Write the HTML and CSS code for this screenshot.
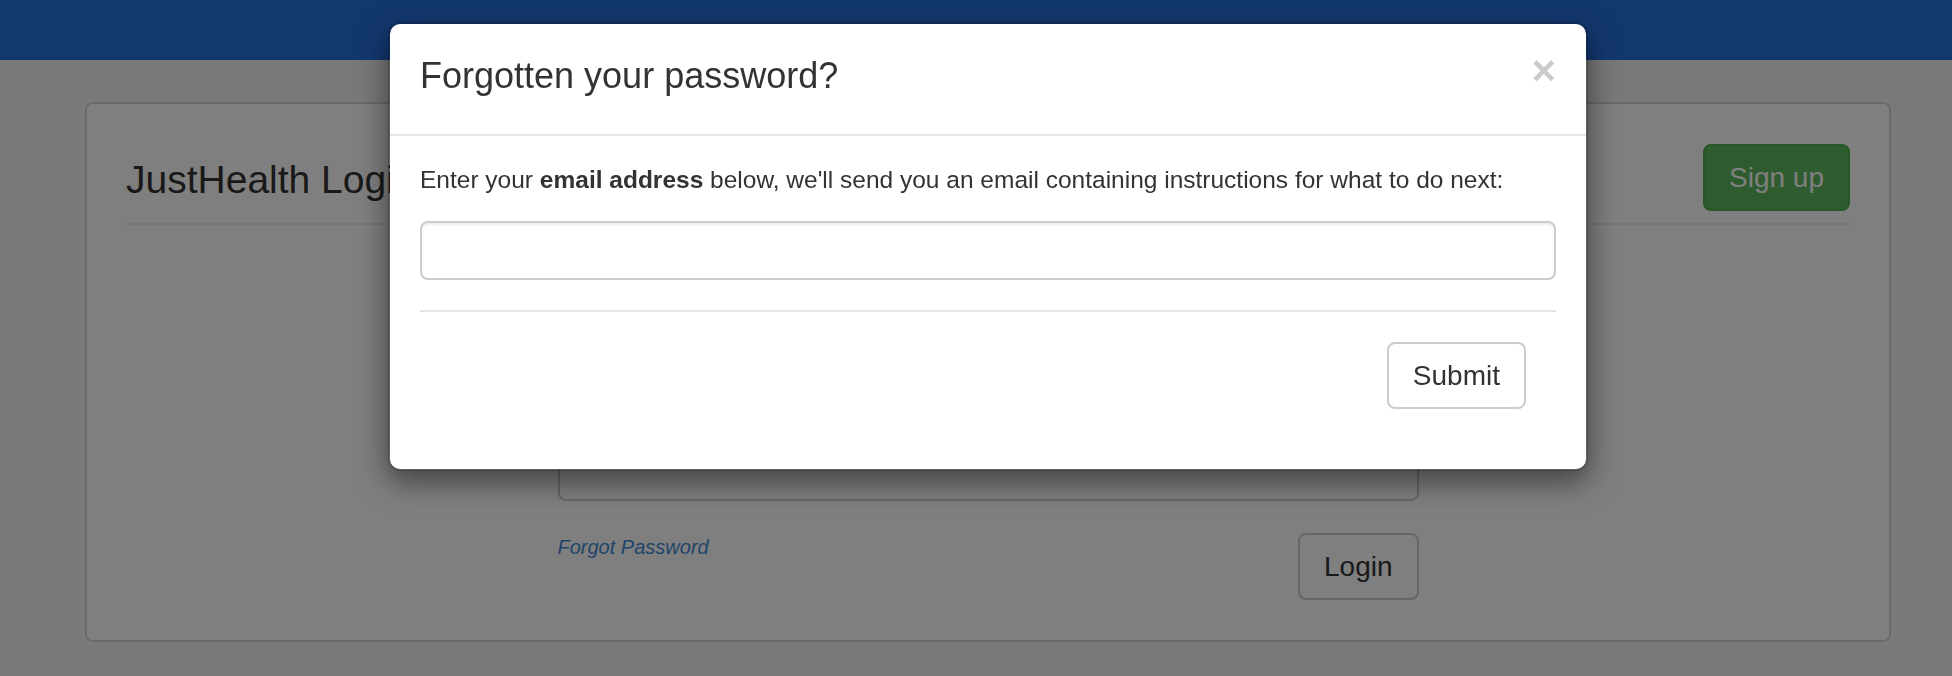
FILE: index.html
```html
<!DOCTYPE html>
<html lang="en">
<head>
<meta charset="utf-8">
<title>JustHealth Login</title>
<link rel="stylesheet" href="styles.css">
</head>
<body>
<nav class="navbar"></nav>
<main class="page">
  <section class="panel">
    <div class="panel-head">
      <h3 class="panel-title">JustHealth Login</h3>
      <a class="btn btn-success" href="#">Sign up</a>
    </div>
    <hr class="divider">
    <form class="login-form">
      <div class="field">
        <label class="field-label">Username</label>
        <input class="field-input" type="text">
      </div>
      <div class="field">
        <label class="field-label">Password</label>
        <input class="field-input" type="password">
      </div>
      <div class="form-actions">
        <a class="forgot" href="#">Forgot Password</a>
        <button class="btn btn-default" type="button">Login</button>
      </div>
    </form>
  </section>
</main>

<div class="backdrop"></div>
<div class="modal">
  <div class="modal-header">
    <h4 class="modal-title">Forgotten your password?</h4>
    <button class="close" type="button">&times;</button>
  </div>
  <div class="modal-body">
    <p class="modal-text">Enter your <strong>email address</strong> below, we'll send you an email containing instructions for what to do next:</p>
    <input class="modal-input" type="email">
    <div class="modal-footer">
      <button class="btn btn-default" type="button">Submit</button>
    </div>
  </div>
</div>
</body>
</html>
```

FILE: styles.css
```css
* { box-sizing: border-box; }

html, body {
  margin: 0;
  height: 100%;
}

body {
  background: #f3f3f3;
  font-family: "Liberation Sans", Arial, Helvetica, sans-serif;
  color: #333;
  overflow: hidden;
}

.navbar {
  height: 60px;
  background: #2670e0;
}

.page {
  padding: 42px 61px 0 85px;
}

.panel {
  background: #fff;
  border: 2px solid #d4d4d4;
  border-radius: 8px;
  padding: 40px 39px 40px 39px;
}

.panel-head {
  display: flex;
  justify-content: space-between;
  align-items: flex-start;
}

.panel-title {
  margin: 15px 0 0 0;
  font-size: 39px;
  line-height: 42px;
  font-weight: normal;
  color: #333;
}

.divider {
  margin: 12px 0 0 0;
  border: 0;
  border-top: 2px solid #eee;
}

.btn {
  display: inline-block;
  font-family: inherit;
  font-size: 28px;
  line-height: 40px;
  padding: 11.5px 24px;
  border: 2px solid #ccc;
  border-radius: 8px;
  text-decoration: none;
  cursor: pointer;
}

.btn-success {
  background: #5cb85c;
  border-color: #4cae4c;
  color: #fff;
}

.btn-default {
  background: #fff;
  border-color: #ccc;
  color: #333;
}

.login-form {
  width: 861px;
  margin: 10px auto 0 auto;
}

.field {
  display: flex;
  flex-direction: column;
  margin-bottom: 30px;
}

.field:last-of-type {
  margin-bottom: 0;
}

.field-label {
  font-size: 28px;
  line-height: 40px;
  font-weight: bold;
  margin-bottom: 10px;
}

.field-input {
  height: 68px;
  border: 2px solid #ccc;
  border-radius: 8px;
  font-size: 28px;
  padding: 12px 24px;
}

.form-actions {
  margin-top: 32px;
  display: flex;
  justify-content: space-between;
  align-items: flex-start;
}

.forgot {
  font-size: 20px;
  line-height: 28px;
  font-style: italic;
  color: #3f8ad0;
  text-decoration: none;
}

.backdrop {
  position: fixed;
  inset: 0;
  background: rgba(0, 0, 0, 0.5);
}

.modal {
  position: absolute;
  left: 388px;
  top: 22px;
  width: 1200px;
  background: #fff;
  border: 2px solid rgba(0, 0, 0, 0.2);
  border-radius: 12px;
  box-shadow: 0 10px 30px rgba(0, 0, 0, 0.5);
  background-clip: padding-box;
}

.modal-header {
  display: flex;
  justify-content: space-between;
  align-items: flex-start;
  padding: 26px 30px 33px 30px;
  border-bottom: 2px solid #e5e5e5;
}

.modal-title {
  margin: 0;
  font-size: 36px;
  line-height: 51px;
  font-weight: normal;
  color: #333;
}

.close {
  margin: 0;
  padding: 0;
  border: 0;
  background: transparent;
  font-family: inherit;
  font-size: 42px;
  font-weight: bold;
  line-height: 1;
  color: #000;
  opacity: 0.2;
  cursor: pointer;
}

.modal-body {
  padding: 30px;
}

.modal-text {
  margin: 0 0 27px 0;
  font-size: 24.5px;
  line-height: 28px;
  color: #333;
}

.modal-input {
  display: block;
  width: 100%;
  height: 59px;
  border: 2px solid #ccc;
  border-radius: 8px;
  box-shadow: inset 0 2px 2px rgba(0, 0, 0, 0.075);
  font-size: 28px;
  padding: 12px 24px;
}

.modal-footer {
  margin-top: 30px;
  border-top: 2px solid #e5e5e5;
  padding: 30px 30px 30px 0;
  text-align: right;
}
```
